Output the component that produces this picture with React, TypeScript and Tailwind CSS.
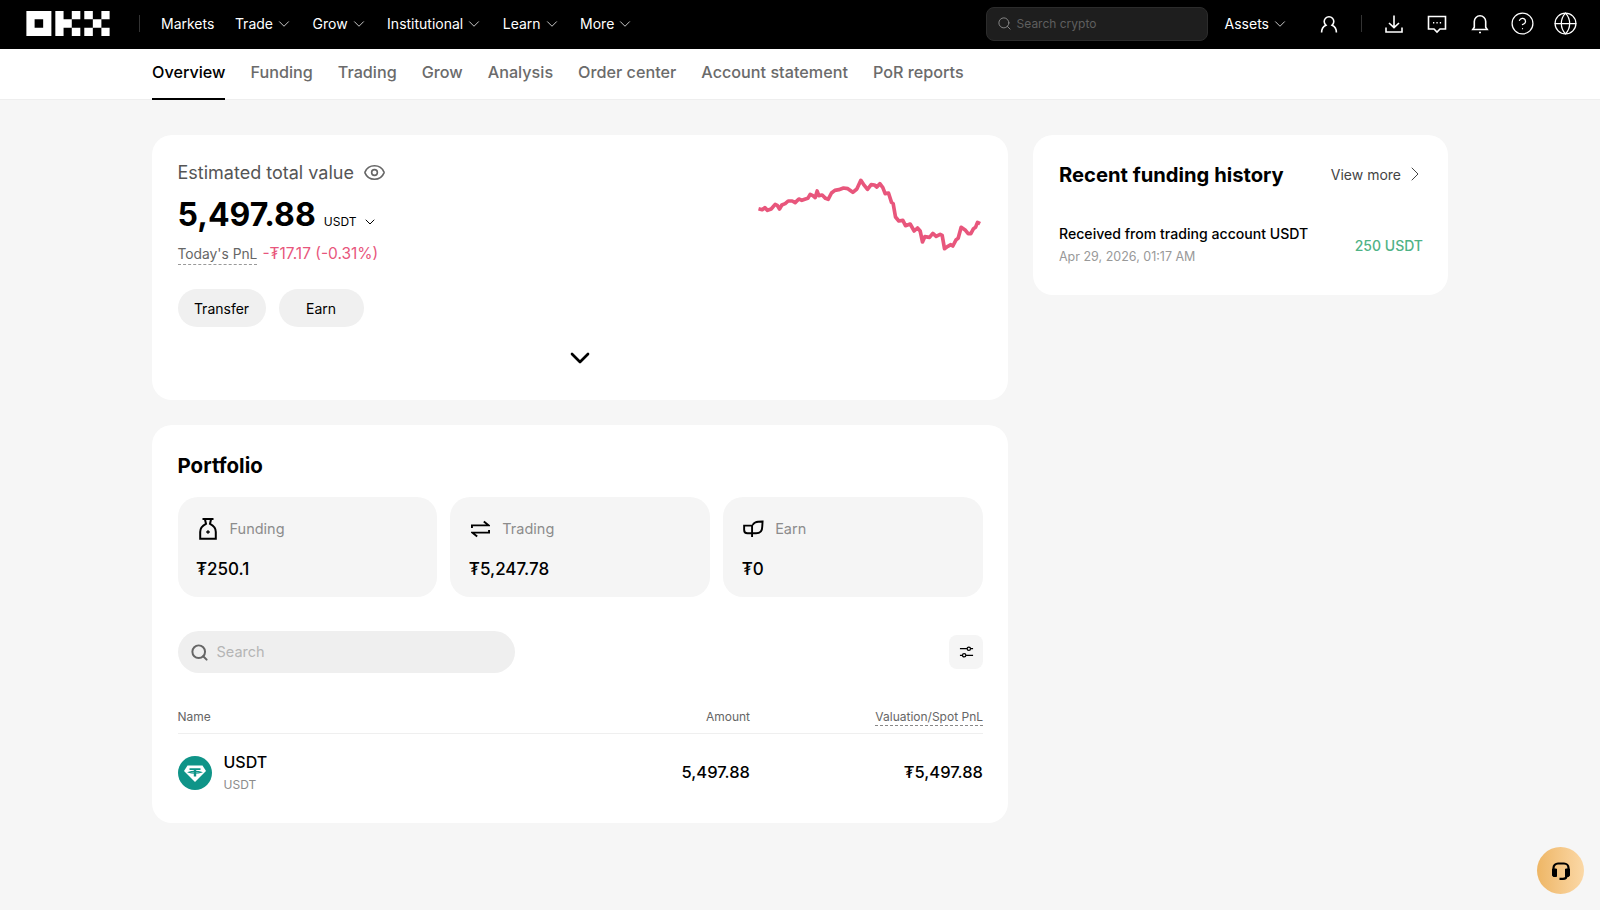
import { ChevronDown, ChevronRight, CircleHelp, Eye, Globe, Search } from 'lucide-react';

const navItems = [
  { label: 'Markets', menu: false },
  { label: 'Trade', menu: true },
  { label: 'Grow', menu: true },
  { label: 'Institutional', menu: true },
  { label: 'Learn', menu: true },
  { label: 'More', menu: true },
];

const tabs = ['Overview', 'Funding', 'Trading', 'Grow', 'Analysis', 'Order center', 'Account statement', 'PoR reports'];

const sparkline =
  '57,145 68,148 76,142 84,150 95,146 107,132 113,135 120,146 127,134 137,130 146,122 158,122 167,127 178,116 187,120 198,116 205,114 212,102 220,106 227,112 233,92 238,106 248,104 258,114 266,117 276,98 286,90 298,88 312,83 325,85 340,96 352,86 364,60 372,72 384,87 395,73 405,74 412,80 421,70 430,82 437,100 447,98 456,126 461,130 468,170 478,182 490,180 498,196 512,191 524,212 534,203 542,212 549,245 556,229 570,231 580,219 590,228 602,222 608,225 615,265 625,258 634,253 640,257 650,238 656,234 665,201 678,210 686,220 694,220 702,205 708,201 714,186 722,190';

function OkxLogo() {
  return (
    <svg viewBox="0 0 253 76" className="w-[84px] h-[25px] shrink-0" fill="#fff">
      <path fillRule="evenodd" d="M0 0h76v76H0zM25 25v26h26V25z" />
      <path d="M88 0h25v25h25v26h-25v25H88zM138 0h26v25h-26zM138 51h26v25h-26z" />
      <path d="M176 0h26v25h-26zM228 0h25v25h-25zM202 25h26v26h-26zM176 51h26v25h-26zM228 51h25v25h-25z" />
    </svg>
  );
}

function UserIcon() {
  return (
    <svg viewBox="0 0 20 20" className="w-[20px] h-[20px]" fill="none" stroke="#fff" strokeWidth="1.6">
      <path d="M2.600 18.400c0-3.300 1.700-6 4.300-7.200a4.800 4.800 0 1 1 6.200 0c2.600 1.200 4.300 3.900 4.300 7.200" />
    </svg>
  );
}

function DownloadIcon() {
  return (
    <svg viewBox="0 0 20 20" className="w-[20px] h-[20px]" fill="none" stroke="#fff" strokeWidth="1.6">
      <path d="M10 1.500v12M5 9l5 4.700L15 9M2 13.500v4.500h16v-4.500" />
    </svg>
  );
}

function ChatIcon() {
  return (
    <svg viewBox="0 0 20 20" className="w-[20px] h-[20px]" fill="none" stroke="#fff" strokeWidth="1.6">
      <path d="M1.500 2.500h17v12.500h-5.500L10 18l-3-3H1.500z" />
      <path d="M6 8.700h1.300M9.400 8.700h1.300M12.800 8.700h1.300" />
    </svg>
  );
}

function BellIcon() {
  return (
    <svg viewBox="0 0 20 20" className="w-[20px] h-[20px]" fill="none" stroke="#fff" strokeWidth="1.6">
      <path d="M10 1.800a5.700 5.700 0 0 0-5.700 5.700v5.800L2.800 15.500h14.400l-1.500-2.200V7.500A5.700 5.700 0 0 0 10 1.800z" />
      <path d="M9 18.500h2" />
    </svg>
  );
}

function BagIcon() {
  return (
    <svg viewBox="0 0 18 22" className="w-[18px] h-[22px]" fill="none" stroke="#000" strokeWidth="2">
      <path d="M3.500 1h11M6 1.500 7 5.800C3.500 7.500 1.200 10 1.200 14v6.800h15.600V14c0-4-2.300-6.500-5.800-8.200L12 1.500" />
      <path d="M7.200 14h3.600M9 12.200v3.600" strokeWidth="1.400" />
    </svg>
  );
}

function SwapIcon() {
  return (
    <svg viewBox="0 0 20 18" className="w-[19px] h-[18px]" fill="none" stroke="#000" strokeWidth="2">
      <path d="M1 8V5.200h17.500L13.500 1M19 10v2.800H1.500L6.500 17" />
    </svg>
  );
}

function LeafIcon() {
  return (
    <svg viewBox="0 0 22 18" className="w-[21px] h-[18px]" fill="none" stroke="#000" strokeWidth="2">
      <path d="M9.500 17.500V5.500H1.200v4.500c0 2.200 1.500 3.500 3.500 3.500h9c4.500 0 6.500-3 6.500-7.500l.3-4.800c-3.500 0-6 .2-7.500.8-1.500.6-2.500 1.500-2.700 3" />
    </svg>
  );
}

function SlidersIcon() {
  return (
    <svg viewBox="0 0 16 14" className="w-[15px] h-[14px]" fill="none" stroke="#000" strokeWidth="1.300">
      <path d="M1 3.500h7.500M12.500 3.500H15M1 10.500h2.500M7.500 10.500H15" />
      <circle cx="10.500" cy="3.500" r="1.800" />
      <circle cx="5.500" cy="10.500" r="1.800" />
    </svg>
  );
}

function TetherIcon() {
  return (
    <svg viewBox="0 0 34 34" className="w-[34px] h-[34px] shrink-0">
      <circle cx="17" cy="17" r="17" fill="#0f9488" />
      <path d="M9.500 9.500h15l3.500 5.500-11 11L6 15z" fill="#fff" />
      <path d="M11.500 12.300h11v1.800H18.200v6.400h-2.400v-6.400h-4.300z" fill="#0f9488" />
      <path d="M10.800 16.200c3-1.100 9.400-1.100 12.400 0-3 1.100-9.400 1.100-12.400 0z" fill="none" stroke="#0f9488" strokeWidth="1.200" />
    </svg>
  );
}

function HeadsetIcon() {
  return (
    <svg viewBox="0 0 20 20" className="w-[20px] h-[20px]" fill="none" stroke="#000" strokeWidth="2.200">
      <path d="M2.500 10V7a4.500 4.500 0 0 1 4.500-4.500h6A4.500 4.500 0 0 1 17.500 7v3" />
      <path d="M1.500 8h4v7.500h-2.500a1.500 1.500 0 0 1-1.500-1.500zM14.500 8h4v6a1.500 1.500 0 0 1-1.500 1.500h-2.500z" fill="#000" strokeWidth="1" />
      <path d="M15.500 15c0 1.800-1.300 2.800-3.500 2.800H8.500" />
    </svg>
  );
}

function PortfolioCard({ icon, label, value }: { icon: React.ReactNode; label: string; value: string }) {
  return (
    <div className="flex-1 h-[100px] rounded-[20px] bg-[#f5f5f5] pl-[18.500px] pt-[19px]">
      <div className="flex items-center h-[26px]">
        <div className="w-[24px] flex justify-center">{icon}</div>
        <span className="ml-[9.500px] text-[14.500px] text-[#8c8c8c]">{label}</span>
      </div>
      <div className="mt-[15px] text-[17px] font-medium text-black leading-[24px]">{value}</div>
    </div>
  );
}

export default function App() {
  return (
    <div className="relative h-[910px] overflow-hidden bg-[#f6f6f6] font-['Inter',sans-serif] text-black">
      <header className="flex items-center h-[49px] bg-black pl-[26px] pr-[13px] pb-[2px] text-white">
        <OkxLogo />
        <div className="ml-[29px] w-px h-[17px] bg-[#333]" />
        <nav className="ml-[21px] flex items-center gap-[19.500px]">
          {navItems.map((item) => (
            <div key={item.label} className="flex items-center gap-[2px] text-[14px]">
              <span className={item.menu ? '' : 'mr-[1px]'}>{item.label}</span>
              {item.menu && <ChevronDown size={18} strokeWidth={1.200} className="text-[#ddd]" />}
            </div>
          ))}
        </nav>
        <div className="ml-auto flex items-center">
          <div className="flex items-center gap-[5px] w-[222px] h-[34px] rounded-lg bg-[#1e1e1e] border border-[#2c2c2c] pl-[10px]">
            <Search size={15} strokeWidth={1.500} className="text-[#8a8a8a]" />
            <span className="text-[12px] text-[#5f5f5f]">Search crypto</span>
          </div>
          <div className="ml-[17px] flex items-center gap-[2px] text-[14px]">
            <span>Assets</span>
            <ChevronDown size={18} strokeWidth={1.200} className="text-[#ddd]" />
          </div>
          <div className="ml-[30px]"><UserIcon /></div>
          <div className="ml-[22px] w-px h-[17px] bg-[#333]" />
          <div className="ml-[10px] flex items-center">
            <div className="w-[43px] flex justify-center"><DownloadIcon /></div>
            <div className="w-[43px] flex justify-center"><ChatIcon /></div>
            <div className="w-[43px] flex justify-center"><BellIcon /></div>
            <div className="w-[43px] flex justify-center"><CircleHelp size={25} strokeWidth={1.200} /></div>
            <div className="w-[43px] flex justify-center"><Globe size={25} strokeWidth={1.200} /></div>
          </div>
        </div>
      </header>

      <div className="flex gap-[25px] h-[51px] bg-white border-b border-[#eeeeee] px-[152px]">
        {tabs.map((tab, i) => (
          <div
            key={tab}
            className={
              i === 0
                ? 'flex items-center h-[51px] pb-[2px] text-[16.200px] font-medium text-black border-b-2 border-black'
                : 'flex items-center h-[51px] pb-[2px] text-[16.200px] font-medium text-[#6b6b6b] border-b-2 border-transparent'
            }
          >
            {tab}
          </div>
        ))}
      </div>

      <main className="flex gap-[25px] px-[152px] pt-[35px]">
        <div className="w-[856px] flex flex-col gap-[25px]">
          <section className="h-[265px] rounded-[20px] bg-white pl-[25.500px] pr-[25px] pt-[24px]">
            <div className="flex justify-between">
              <div>
                <div className="flex items-center h-[26px] gap-[9px] text-[18px] text-[#555]">
                  <span>Estimated total value</span>
                  <Eye size={23} strokeWidth={1.700} className="text-[#666]" />
                </div>
                <div className="mt-[8px] flex items-end h-[44px]">
                  <span className="text-[32px] leading-[44px] font-bold">5,497.88</span>
                  <span className="ml-[8px] mb-[7px] text-[12px] leading-[16px]">USDT</span>
                  <ChevronDown size={16} strokeWidth={1.500} className="ml-[6px] mb-[7px]" />
                </div>
                <div className="mt-[5px] flex items-center h-[24px]">
                  <span className="text-[13.800px] text-[#666] border-b border-dashed border-[#999] leading-[20px]">Today's PnL</span>
                  <span className="ml-[5px] text-[15.500px] text-[#e8567c]">-₮17.17 (-0.31%)</span>
                </div>
                <div className="mt-[23px] flex gap-[13px]">
                  <button className="w-[88px] h-[38px] rounded-full bg-[#f0f0f0] text-[14px]">Transfer</button>
                  <button className="w-[85px] h-[38px] rounded-full bg-[#f0f0f0] text-[14px]">Earn</button>
                </div>
              </div>
              <svg viewBox="50 50 680 225" className="w-[227px] h-[75px] mt-[18px] shrink-0" fill="none">
                <polyline points={sparkline} stroke="#e8567c" strokeWidth="11" strokeLinejoin="round" />
              </svg>
            </div>
            <div className="mt-[15px] flex justify-center">
              <ChevronDown size={32} strokeWidth={2} />
            </div>
          </section>

          <section className="h-[398px] rounded-[20px] bg-white pl-[25.500px] pr-[25px] pt-[27px]">
            <h2 className="text-[20.500px] leading-[28px] font-bold">Portfolio</h2>
            <div className="mt-[17px] flex gap-[13px]">
              <PortfolioCard icon={<BagIcon />} label="Funding" value="₮250.1" />
              <PortfolioCard icon={<SwapIcon />} label="Trading" value="₮5,247.78" />
              <PortfolioCard icon={<LeafIcon />} label="Earn" value="₮0" />
            </div>
            <div className="mt-[34px] flex items-center justify-between">
              <div className="flex items-center gap-[8px] w-[337px] h-[42px] rounded-full bg-[#efefef] pl-[12px]">
                <Search size={19} strokeWidth={2.500} className="text-[#666]" />
                <span className="text-[14.500px] text-[#b5b5b5]">Search</span>
              </div>
              <button className="flex items-center justify-center w-[34px] h-[34px] rounded-lg bg-[#f5f5f5]">
                <SlidersIcon />
              </button>
            </div>
            <div className="mt-[33px] flex items-center h-[28px] pb-[6px] border-b border-[#efefef] text-[12px] text-[#666]">
              <span className="flex-1">Name</span>
              <span className="w-[200px] text-right">Amount</span>
              <span className="w-[233px] flex justify-end">
                <span className="border-b border-dashed border-[#888] leading-[17px]">Valuation/Spot PnL</span>
              </span>
            </div>
            <div className="mt-[17px] flex items-center">
              <TetherIcon />
              <div className="ml-[12px] flex-1">
                <div className="text-[16px] leading-[22px] font-medium">USDT</div>
                <div className="mt-[3px] text-[12px] leading-[18px] text-[#8c8c8c]">USDT</div>
              </div>
              <span className="w-[200px] text-right text-[16.500px] font-medium">5,497.88</span>
              <span className="w-[233px] text-right text-[16.500px] font-medium">₮5,497.88</span>
            </div>
          </section>
        </div>

        <aside className="w-[415px] h-[160px] rounded-[20px] bg-white pl-[26px] pr-[25px] pt-[26px]">
          <div className="flex items-center justify-between">
            <h2 className="text-[20.200px] leading-[28px] font-bold">Recent funding history</h2>
            <div className="flex items-center gap-[2px] -mr-[4px] pb-[2px] text-[14px] text-[#444]">
              <span>View more</span>
              <ChevronRight size={24} strokeWidth={1} />
            </div>
          </div>
          <div className="mt-[34px] flex items-center justify-between">
            <div>
              <div className="text-[14.100px] leading-[22px] font-medium">Received from trading account USDT</div>
              <div className="text-[12.500px] leading-[23px] text-[#999]">Apr 29, 2026, 01:17 AM</div>
            </div>
            <span className="text-[14px] font-medium text-[#4fb286]">250 USDT</span>
          </div>
        </aside>
      </main>

      <button className="absolute left-[1537px] top-[847px] flex items-center justify-center w-[47px] h-[47px] rounded-full bg-gradient-to-r from-[#eeb665] to-[#fbd8a6]">
        <HeadsetIcon />
      </button>
    </div>
  );
}
